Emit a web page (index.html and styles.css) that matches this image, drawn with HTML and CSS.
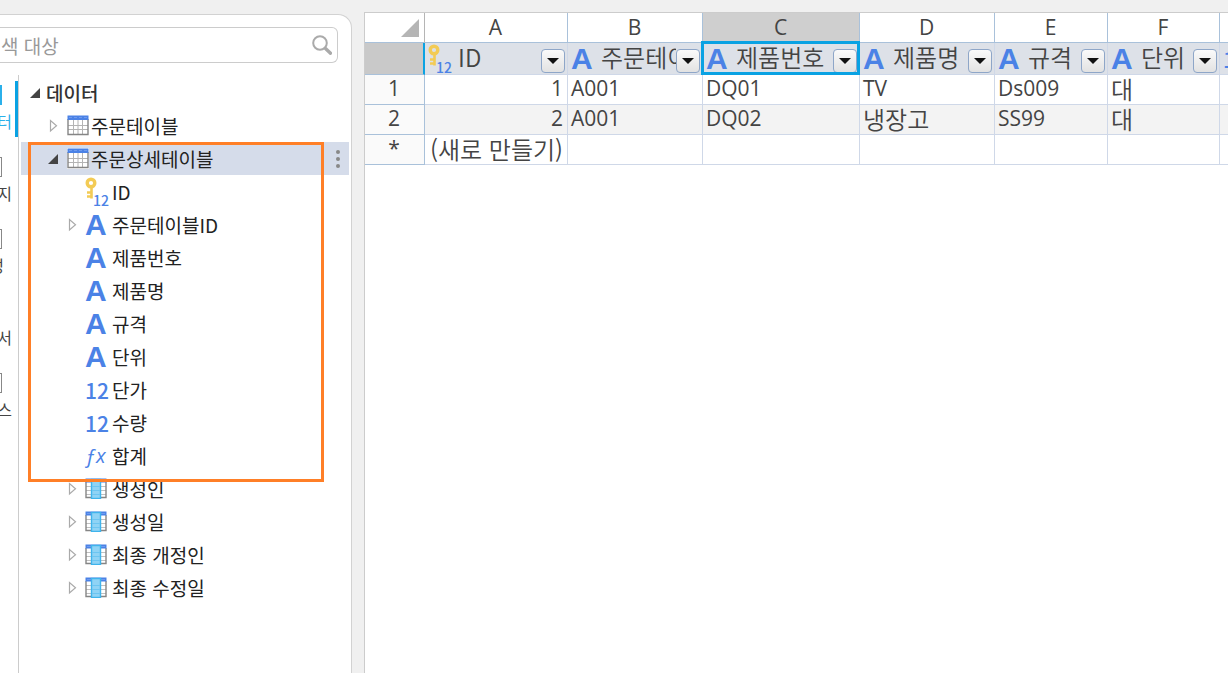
FILE: index.html
```
<!DOCTYPE html>
<html lang="ko">
<head>
    <meta charset="UTF-8">
    <meta name="viewport" content="width=device-width, initial-scale=1.0">
    <title>주문상세테이블</title>
    <link rel="stylesheet" href="styles.css">
</head>
<body>
    <!-- Shared icons -->
    <svg class="sprite" aria-hidden="true">
        <symbol id="i-table" viewBox="0 0 22 21">
            <rect x="0" y="0" width="22" height="21" fill="#fff"/>
            <path d="M1 10.5h20M1 14.5h20M6.5 5v15M11 5v15M15.5 5v15" stroke="#b4b4b4" fill="none"/>
            <path d="M1 4v15.5h20V4" stroke="#858585" stroke-width="1.4" fill="none"/>
            <rect x="0.5" y="0.5" width="21" height="4.5" fill="#4b82e6"/>
            <path d="M2 2.5h3M7 2.5h3M12 2.5h3M17 2.5h3" stroke="#6f9bee"/>
        </symbol>
        <symbol id="i-column" viewBox="0 0 22 21">
            <path d="M1 8.5h20M1 12.5h20M1 16.5h20" stroke="#c0c0c0" fill="none"/>
            <path d="M1 4v15.5h20V4" stroke="#858585" stroke-width="1.4" fill="none"/>
            <rect x="0.5" y="0.5" width="21" height="4" fill="#4b82e6"/>
            <path d="M2 2.5h4M16 2.5h4" stroke="#6f9bee"/>
            <rect x="6.5" y="1.5" width="9" height="19" fill="#8fd3f5" stroke="#3fb4ec" stroke-width="1.4"/>
            <path d="M7 8.5h8M7 12.5h8M7 16.5h8" stroke="#6cc5f1"/>
        </symbol>
        <symbol id="i-key" viewBox="0 0 24 30">
            <circle cx="6" cy="6" r="3.8" fill="none" stroke="#f3cb55" stroke-width="3.4"/>
            <path d="M6.5 10v11.5M2 15.5h4M2 19.5h4" fill="none" stroke="#f3cb55" stroke-width="2.6"/>
            <text x="8" y="29" class="key-num">12</text>
        </symbol>
        <symbol id="i-open" viewBox="0 0 10 10">
            <path d="M10 0v10H0z" fill="#444"/>
        </symbol>
        <symbol id="i-closed" viewBox="0 0 10 14">
            <path d="M2.5 1.5v10.5L8.5 6.8z" fill="#fff" stroke="#aaa" stroke-width="1.2"/>
        </symbol>
        <symbol id="i-drop" viewBox="0 0 12 6">
            <path d="M0 0h12L6 6z" fill="#111"/>
        </symbol>
    </svg>

    <div class="app">
        <aside class="sidebar">
            <div class="search">
                <input type="text" class="search-input" placeholder="색 대상" aria-label="검색 대상">
                <button type="button" class="search-btn" aria-label="검색">
                    <svg width="20" height="20" viewBox="0 0 20 20" fill="none" stroke="#aaa">
                        <circle cx="8" cy="8" r="6.8" stroke-width="2"/>
                        <path d="M13.5 13.5l5 4.7" stroke-width="3.4" stroke-linecap="round"/>
                    </svg>
                </button>
            </div>

            <div class="panes">
                <nav class="rail">
                    <a href="#" class="rail-item active"><span class="rail-icon"></span>터</a>
                    <a href="#" class="rail-item"><span class="rail-icon"></span>지</a>
                    <a href="#" class="rail-item short"><span class="rail-icon"></span>정</a>
                    <a href="#" class="rail-item no-icon"><span class="rail-icon"></span>서</a>
                    <a href="#" class="rail-item"><span class="rail-icon"></span>스</a>
                </nav>

                <div class="tree">
                    <ul>
                        <li class="row root">
                            <button type="button" class="toggle" aria-label="접기"><svg width="10" height="10"><use href="#i-open"/></svg></button>
                            <span>데이터</span>
                        </li>
                        <li class="row table-row">
                            <button type="button" class="toggle" aria-label="펼치기"><svg width="10" height="14"><use href="#i-closed"/></svg></button>
                            <svg class="icon" width="22" height="21"><use href="#i-table"/></svg>
                            <span>주문테이블</span>
                        </li>
                        <li class="row table-row selected">
                            <button type="button" class="toggle" aria-label="접기"><svg width="10" height="10"><use href="#i-open"/></svg></button>
                            <svg class="icon" width="22" height="21"><use href="#i-table"/></svg>
                            <span>주문상세테이블</span>
                            <button type="button" class="more" aria-label="더 보기"><i></i><i></i><i></i></button>
                        </li>
                        <li class="row field">
                            <span class="toggle"></span>
                            <svg class="icon" width="24" height="30"><use href="#i-key"/></svg>
                            <span>ID</span>
                        </li>
                        <li class="row field">
                            <button type="button" class="toggle" aria-label="펼치기"><svg width="10" height="14"><use href="#i-closed"/></svg></button>
                            <b class="icon type-text">A</b>
                            <span>주문테이블ID</span>
                        </li>
                        <li class="row field"><span class="toggle"></span><b class="icon type-text">A</b><span>제품번호</span></li>
                        <li class="row field"><span class="toggle"></span><b class="icon type-text">A</b><span>제품명</span></li>
                        <li class="row field"><span class="toggle"></span><b class="icon type-text">A</b><span>규격</span></li>
                        <li class="row field"><span class="toggle"></span><b class="icon type-text">A</b><span>단위</span></li>
                        <li class="row field"><span class="toggle"></span><b class="icon type-num">12</b><span>단가</span></li>
                        <li class="row field"><span class="toggle"></span><b class="icon type-num">12</b><span>수량</span></li>
                        <li class="row field"><span class="toggle"></span><i class="icon type-fx">ƒx</i><span>합계</span></li>
                        <li class="row field">
                            <button type="button" class="toggle" aria-label="펼치기"><svg width="10" height="14"><use href="#i-closed"/></svg></button>
                            <svg class="icon" width="22" height="21"><use href="#i-column"/></svg>
                            <span>생성인</span>
                        </li>
                        <li class="row field">
                            <button type="button" class="toggle" aria-label="펼치기"><svg width="10" height="14"><use href="#i-closed"/></svg></button>
                            <svg class="icon" width="22" height="21"><use href="#i-column"/></svg>
                            <span>생성일</span>
                        </li>
                        <li class="row field">
                            <button type="button" class="toggle" aria-label="펼치기"><svg width="10" height="14"><use href="#i-closed"/></svg></button>
                            <svg class="icon" width="22" height="21"><use href="#i-column"/></svg>
                            <span>최종 개정인</span>
                        </li>
                        <li class="row field">
                            <button type="button" class="toggle" aria-label="펼치기"><svg width="10" height="14"><use href="#i-closed"/></svg></button>
                            <svg class="icon" width="22" height="21"><use href="#i-column"/></svg>
                            <span>최종 수정일</span>
                        </li>
                    </ul>
                    <div class="highlight"></div>
                </div>
            </div>
        </aside>

        <main class="sheet">
            <table>
                <colgroup>
                    <col class="w-head"><col class="w-a"><col class="w-b"><col class="w-c"><col class="w-b"><col class="w-e"><col class="w-f"><col class="w-f">
                </colgroup>
                <thead>
                    <tr class="letters">
                        <th class="corner"><svg width="18" height="18" viewBox="0 0 18 18"><path d="M18 0v18H0z" fill="#b5b5b5"/></svg></th>
                        <th>A</th><th>B</th><th class="current">C</th><th>D</th><th>E</th><th>F</th><th></th>
                    </tr>
                    <tr class="fields">
                        <th class="row-head"></th>
                        <th><div class="cell">
                            <svg class="icon" width="24" height="30"><use href="#i-key"/></svg>
                            <span class="label">ID</span>
                            <button type="button" class="filter" aria-label="ID 필터"><svg width="12" height="6"><use href="#i-drop"/></svg></button>
                        </div></th>
                        <th><div class="cell">
                            <b class="icon type-text">A</b>
                            <span class="label">주문테이블ID</span>
                            <button type="button" class="filter" aria-label="주문테이블ID 필터"><svg width="12" height="6"><use href="#i-drop"/></svg></button>
                        </div></th>
                        <th class="picked"><div class="cell">
                            <b class="icon type-text">A</b>
                            <span class="label">제품번호</span>
                            <button type="button" class="filter" aria-label="제품번호 필터"><svg width="12" height="6"><use href="#i-drop"/></svg></button>
                        </div></th>
                        <th><div class="cell">
                            <b class="icon type-text">A</b>
                            <span class="label">제품명</span>
                            <button type="button" class="filter" aria-label="제품명 필터"><svg width="12" height="6"><use href="#i-drop"/></svg></button>
                        </div></th>
                        <th><div class="cell">
                            <b class="icon type-text">A</b>
                            <span class="label">규격</span>
                            <button type="button" class="filter" aria-label="규격 필터"><svg width="12" height="6"><use href="#i-drop"/></svg></button>
                        </div></th>
                        <th><div class="cell">
                            <b class="icon type-text">A</b>
                            <span class="label">단위</span>
                            <button type="button" class="filter" aria-label="단위 필터"><svg width="12" height="6"><use href="#i-drop"/></svg></button>
                        </div></th>
                        <th><div class="cell"><b class="icon type-num">12</b></div></th>
                    </tr>
                </thead>
                <tbody>
                    <tr>
                        <th class="row-num">1</th>
                        <td class="num">1</td><td>A001</td><td>DQ01</td><td>TV</td><td>Ds009</td><td class="ko">대</td><td></td>
                    </tr>
                    <tr class="even">
                        <th class="row-num">2</th>
                        <td class="num">2</td><td>A001</td><td>DQ02</td><td class="ko">냉장고</td><td>SS99</td><td class="ko">대</td><td></td>
                    </tr>
                    <tr>
                        <th class="row-num">*</th>
                        <td class="ko num">(새로 만들기)</td><td></td><td></td><td></td><td></td><td></td><td></td>
                    </tr>
                </tbody>
            </table>
        </main>
    </div>
</body>
</html>
```
FILE: styles.css
```
* {
    box-sizing: border-box;
}
body {
    margin: 0;
    background-color: #f0f0f0;
    color: #222;
    font-family: 'Noto Sans CJK KR', sans-serif;
    overflow: hidden;
}
button {
    padding: 0;
    border: none;
    background: none;
    cursor: pointer;
}
.sprite {
    position: absolute;
    width: 0;
    height: 0;
}
.app {
    display: flex;
    gap: 12px;
    height: 100vh;
    padding-top: 12px;
}

/* Sidebar */
.sidebar {
    display: flex;
    flex-direction: column;
    flex: 0 0 352px;
    margin-top: 2px;
    background-color: #fff;
    border: 1px solid #d2d2d2;
    border-width: 1px 1px 0 0;
    border-top-right-radius: 14px;
}
.search {
    display: flex;
    align-items: center;
    height: 36px;
    margin: 12px 13px 0 0;
    padding-right: 5px;
    border: 1px solid #ccc;
    border-left: none;
    border-radius: 0 6px 6px 0;
}
.search-input {
    flex: 1;
    min-width: 0;
    padding: 0 1px;
    border: none;
    outline: none;
    font: 19px 'Noto Sans CJK KR', sans-serif;
}
.search-input::placeholder {
    color: #999;
    opacity: 1;
}
.search-btn {
    display: flex;
}
.panes {
    display: flex;
    flex: 1;
    margin-top: 12px;
}

/* Icon rail, mostly scrolled off to the left */
.rail {
    flex: 0 0 19px;
    padding-top: 6px;
    border-right: 1px solid #ccc;
    overflow: hidden;
}
.rail-item {
    display: flex;
    flex-direction: column;
    align-items: flex-end;
    height: 56px;
    margin-bottom: 16px;
    padding-right: 6px;
    color: #444;
    font-size: 16px;
    line-height: 20px;
    text-decoration: none;
}
.rail-icon {
    width: 12px;
    height: 20px;
    margin: 4px 10px 6px 0;
    border: 1px solid #888;
}
.rail-item.active {
    border-right: 3px solid #0aa2e3;
    padding-right: 3px;
    color: #2bb0ea;
}
.active .rail-icon {
    background-color: #2bb0ea;
    border-color: #2bb0ea;
}
.rail-item.short {
    padding-right: 14px;
}
.short .rail-icon {
    margin-right: 2px;
}
.no-icon .rail-icon {
    visibility: hidden;
}

/* Tree */
.tree {
    position: relative;
    flex: 1;
    padding: 1px 2px 0 2px;
}
.tree ul {
    margin: 0;
    padding: 0;
    list-style: none;
}
.row {
    display: flex;
    align-items: center;
    height: 33px;
    font-size: 19px;
    white-space: nowrap;
}
.root {
    padding-left: 9px;
    color: #333;
    font-weight: 500;
}
.table-row {
    padding-left: 27px;
}
.field {
    padding-left: 46px;
}
.row .toggle {
    display: flex;
    flex: 0 0 16px;
}
.table-row .toggle {
    flex-basis: 19px;
}
.field .toggle {
    flex-basis: 18px;
}
.table-row .icon {
    margin-right: 2px;
}
.field .icon {
    flex: 0 0 24px;
    margin-right: 3px;
}
.field svg.icon[width="22"] {
    flex-basis: 22px;
    margin-right: 5px;
}
.selected {
    background-color: #d5dcea;
}
.more {
    display: flex;
    flex-direction: column;
    gap: 3px;
    margin-left: auto;
    padding: 0 9px;
}
.more i {
    width: 4px;
    height: 4px;
    border-radius: 50%;
    background-color: #888;
}
.highlight {
    position: absolute;
    top: 67px;
    left: 9px;
    width: 296px;
    height: 340px;
    border: 3px solid #ff7f27;
    pointer-events: none;
}

/* Field type icons */
.key-num {
    font: 500 14px 'Noto Sans CJK KR', sans-serif;
    fill: #4b82e6;
}
.type-text {
    color: #4b82e6;
    font: bold 30px 'Liberation Sans', Arial, sans-serif;
    line-height: 30px;
}
.type-num {
    color: #4b82e6;
    font-size: 21px;
    font-weight: 500;
}
.type-fx {
    color: #4b82e6;
    font: italic 20px 'Open Sans', sans-serif;
}

/* Sheet */
.sheet {
    flex: 1;
    min-width: 0;
    overflow: hidden;
    background-color: #fff;
    border-top: 1px solid #ccc;
    border-left: 1px solid #ccc;
}
table {
    width: 967px;
    table-layout: fixed;
    border-collapse: separate;
    border-spacing: 0;
}
.w-head { width: 60px; }
.w-a { width: 143px; }
.w-b { width: 135px; }
.w-c { width: 157px; }
.w-e { width: 113px; }
.w-f { width: 112px; }
th,
td {
    height: 30px;
    padding: 0 4px 0 3px;
    border-right: 1px solid #cfd8e8;
    border-bottom: 1px solid #cfd8e8;
    color: #444;
    font: 21px 'Open Sans', sans-serif;
    line-height: 27px;
    text-align: left;
    white-space: nowrap;
}
td {
    padding-bottom: 2px;
}
td.num {
    text-align: right;
}
td.ko {
    font: 350 24px 'Noto Sans CJK KR', sans-serif;
    line-height: 27px;
}
.even td {
    background-color: #f3f3f3;
}
.letters th,
.row-num {
    border-color: #a9c1da;
    text-align: center;
}
.row-num {
    padding-bottom: 2px;
    background-color: #fafafa;
}
.letters .corner {
    padding: 0 5px 0 0;
    border-right-color: #b5b5b5;
    text-align: right;
}
.corner svg {
    display: block;
    margin-left: auto;
}
.letters .current {
    background-color: #cfcfcf;
}
.fields th {
    height: 32px;
    padding: 0;
    background-color: #dde1e8;
}
.fields .row-head {
    background-color: #c9c9c9;
    border-right: 2px solid #0aa2e3;
    border-bottom-color: #a9c1da;
}
.fields .picked {
    position: relative;
}
.picked::after {
    content: '';
    position: absolute;
    inset: -2px -1px -1px -2px;
    border: 3px solid #0aa2e3;
    pointer-events: none;
}
.cell {
    display: flex;
    align-items: center;
    height: 31px;
    padding: 0 2px 0 3px;
}
.cell .icon {
    flex: 0 0 24px;
    margin-right: 6px;
}
.label {
    flex: 1;
    min-width: 0;
    margin-bottom: 3px;
    overflow: hidden;
    font: 350 24px 'Noto Sans CJK KR', sans-serif;
    line-height: 28px;
}
.cell .type-num {
    font: 500 21px 'Noto Sans CJK KR', sans-serif;
}
.filter {
    display: flex;
    align-items: center;
    justify-content: center;
    flex: 0 0 24px;
    height: 24px;
    margin-top: 4px;
    background: linear-gradient(#fafafa, #e2e2e2);
    border: 1px solid #8ea6c8;
    border-radius: 4px;
}
```
